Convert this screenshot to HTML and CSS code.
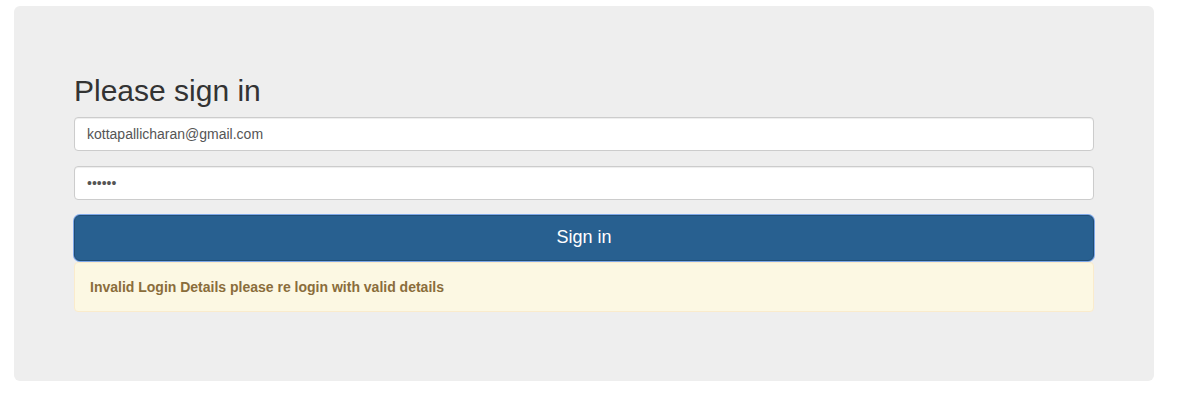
FILE: index.html
```html
<!DOCTYPE html>
<html>
<head>
<meta charset="utf-8">
<link rel="stylesheet" href="styles.css">
</head>
<body>
<div class="page">
  <div class="jumbotron">
    <form class="signin">
      <h2 class="title">Please sign in</h2>
      <input class="field" type="email" value="kottapallicharan@gmail.com">
      <input class="field" type="password" value="123456">
      <button class="btn" type="button">Sign in</button>
      <div class="alert">Invalid Login Details please re login with valid details</div>
    </form>
  </div>
</div>
</body>
</html>
```
FILE: styles.css
```css
* { box-sizing: border-box; }
html, body { margin: 0; padding: 0; background: #fff; }
body {
  font-family: "Liberation Sans", Arial, sans-serif;
  font-size: 14px;
  line-height: 1.42857;
  color: #333;
}
.page { padding: 6px 37px 0 14px; }
.jumbotron {
  width: 1140px;
  height: 375px;
  background: #eee;
  border-radius: 6px;
  padding: 48px 60px;
}
.signin { display: flex; flex-direction: column; }
.title {
  margin: 20px 0 10px;
  font-size: 30px;
  font-weight: 500;
  line-height: 33px;
  color: #333;
}
.field {
  display: block;
  width: 100%;
  height: 34px;
  margin: 0 0 15px;
  padding: 6px 12px;
  font-family: "Liberation Sans", Arial, sans-serif;
  font-size: 14px;
  color: #555;
  background: #fff;
  border: 1px solid #ccc;
  border-radius: 4px;
  box-shadow: inset 0 1px 1px rgba(0,0,0,.075);
  outline: none;
}
.btn {
  height: 46px;
  width: 100%;
  font-family: "Liberation Sans", Arial, sans-serif;
  font-size: 18px;
  line-height: 1.3333;
  color: #fff;
  background: #286090;
  border: 1px solid #204d74;
  border-radius: 6px;
  box-shadow: 0 0 0 1px #7ea8e8;
  padding: 0;
}
.alert {
  margin-top: 1px;
  height: 50px;
  padding: 15px;
  background: #fcf8e3;
  border: 1px solid #faebcc;
  border-radius: 4px;
  color: #8a6d3b;
  font-weight: bold;
  font-size: 14px;
  line-height: 18px;
}
```
